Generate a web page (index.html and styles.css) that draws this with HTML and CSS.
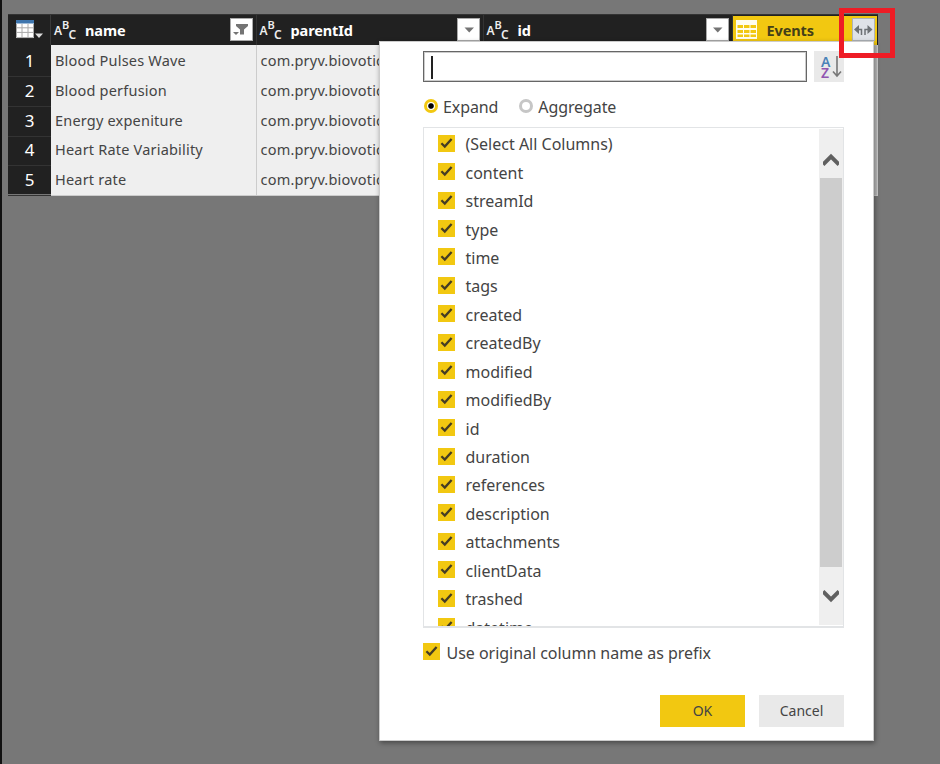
FILE: index.html
```html
<!DOCTYPE html>
<html lang="en">
<head>
<meta charset="utf-8">
<title>Expand columns</title>
<link rel="stylesheet" href="styles.css">
</head>
<body>
<svg class="defs" width="0" height="0">
  <symbol id="check" viewBox="0 0 17 17"><path d="M3.4 8.2 6.8 11.600 13.600 4" fill="none" stroke="#453d24" stroke-width="2.3"/></symbol>
</svg>
<div class="table">
  <div class="row head">
    <div class="corner">
      <svg width="29" height="20" viewBox="0 0 29 20"><path fill="#fff" d="M0 1h18v17H0z"/><path fill="#3f76ae" d="M0 0h18v3.5H0z"/><path d="M0 7.8h18M0 12.4h18M6 4v14M12 4v14M.5 4v13.6h17V4" fill="none" stroke="#aaa"/><path fill="#ddd" d="M19 13.5h8L23 18z"/></svg>
    </div>
    <div class="col"><span class="abc"><i>A</i><i>B</i><i>C</i></span><b>name</b>
      <span class="drop"><svg width="22" height="22" viewBox="0 0 22 22"><path fill="#747474" d="M5 5h12v2l-4 3.500v5h-4v-5L5 7zM2 13h6l-3 3z"/></svg></span></div>
    <div class="col"><span class="abc"><i>A</i><i>B</i><i>C</i></span><b>parentId</b>
      <span class="drop"><svg width="22" height="22" viewBox="0 0 22 22"><path fill="#747474" d="M6.500 8.500h9.500l-4.750 5z"/></svg></span></div>
    <div class="col"><span class="abc"><i>A</i><i>B</i><i>C</i></span><b>id</b>
      <span class="drop"><svg width="22" height="22" viewBox="0 0 22 22"><path fill="#747474" d="M6 8.500h9.500l-4.750 5z"/></svg></span></div>
    <div class="col events">
      <svg width="21" height="19" viewBox="0 0 21 19"><path fill="#fffdf0" d="M0 0h21v19H0z"/><path fill="#f2c811" d="M1.500 5h5.500v3H1.500zM8 5h5.500v3H8zM14.500 5H20v3h-5.500zM1.500 10h5.500v3H1.500zM8 10h5.500v3H8zM14.500 10H20v3h-5.500zM1.500 14.500h5.500V17H1.500zM8 14.500h5.500V17H8zM14.500 14.500H20V17h-5.500z"/></svg>
      <b>Events</b>
      <span class="drop expand"><svg width="20" height="20" viewBox="0 0 20 20"><path fill="#6d7175" d="M1 10.500 6 6v9zM19.500 10.500 14.500 6v9z"/><path d="M5 10.500h3.500V16M15 10.500h-3V16" fill="none" stroke="#6d7175" stroke-width="1.500"/></svg></span>
    </div>
  </div>
  <div class="row"><div class="num">1</div><div class="cell">Blood Pulses Wave</div><div class="cell">com.pryv.biovotion</div><div class="cell"></div><div class="cell last"></div></div>
  <div class="row"><div class="num">2</div><div class="cell">Blood perfusion</div><div class="cell">com.pryv.biovotion</div><div class="cell"></div><div class="cell last"></div></div>
  <div class="row"><div class="num">3</div><div class="cell">Energy expeniture</div><div class="cell">com.pryv.biovotion</div><div class="cell"></div><div class="cell last"></div></div>
  <div class="row"><div class="num">4</div><div class="cell">Heart Rate Variability</div><div class="cell">com.pryv.biovotion</div><div class="cell"></div><div class="cell last"></div></div>
  <div class="row"><div class="num">5</div><div class="cell">Heart rate</div><div class="cell">com.pryv.biovotion</div><div class="cell"></div><div class="cell last"></div></div>
</div>

<div class="dialog">
  <div class="search-row">
    <div class="search"><span class="caret"></span></div>
    <div class="sort"><span class="az"><i>A</i><i>Z</i></span><svg width="10" height="22" viewBox="0 0 10 22"><path d="M5 0v20M1 15.500 5 20l4-4.500" fill="none" stroke="#777" stroke-width="1.600"/></svg></div>
  </div>
  <div class="modes">
    <span class="radio on"></span><span class="mode">Expand</span>
    <span class="radio"></span><span class="mode">Aggregate</span>
  </div>
  <div class="list">
    <div class="items">
      <div class="item"><svg class="box"><use href="#check"/></svg><span>(Select All Columns)</span></div>
      <div class="item"><svg class="box"><use href="#check"/></svg><span>content</span></div>
      <div class="item"><svg class="box"><use href="#check"/></svg><span>streamId</span></div>
      <div class="item"><svg class="box"><use href="#check"/></svg><span>type</span></div>
      <div class="item"><svg class="box"><use href="#check"/></svg><span>time</span></div>
      <div class="item"><svg class="box"><use href="#check"/></svg><span>tags</span></div>
      <div class="item"><svg class="box"><use href="#check"/></svg><span>created</span></div>
      <div class="item"><svg class="box"><use href="#check"/></svg><span>createdBy</span></div>
      <div class="item"><svg class="box"><use href="#check"/></svg><span>modified</span></div>
      <div class="item"><svg class="box"><use href="#check"/></svg><span>modifiedBy</span></div>
      <div class="item"><svg class="box"><use href="#check"/></svg><span>id</span></div>
      <div class="item"><svg class="box"><use href="#check"/></svg><span>duration</span></div>
      <div class="item"><svg class="box"><use href="#check"/></svg><span>references</span></div>
      <div class="item"><svg class="box"><use href="#check"/></svg><span>description</span></div>
      <div class="item"><svg class="box"><use href="#check"/></svg><span>attachments</span></div>
      <div class="item"><svg class="box"><use href="#check"/></svg><span>clientData</span></div>
      <div class="item"><svg class="box"><use href="#check"/></svg><span>trashed</span></div>
      <div class="item"><svg class="box"><use href="#check"/></svg><span>datetime</span></div>
    </div>
    <div class="scroll">
      <div class="arrow up"><svg width="16" height="13" viewBox="0 0 16 13"><path d="M0 11.500 8 3.500l8 8" fill="none" stroke="#606060" stroke-width="4"/></svg></div>
      <div class="thumb"></div>
      <div class="arrow down"><svg width="16" height="13" viewBox="0 0 16 13"><path d="M0 1.500l8 8 8-8" fill="none" stroke="#606060" stroke-width="4"/></svg></div>
    </div>
  </div>
  <div class="prefix"><svg class="box"><use href="#check"/></svg><span>Use original column name as prefix</span></div>
  <div class="buttons"><div class="btn ok">OK</div><div class="btn">Cancel</div></div>
</div>
<div class="highlight"></div>
</body>
</html>
```
FILE: styles.css
```css
* { box-sizing: border-box; }
body {
  margin: 0;
  width: 940px;
  height: 764px;
  overflow: hidden;
  position: relative;
  background: #777;
  border-left: 2px solid #111;
  padding: 14px 0 0 6px;
  font-family: "Noto Sans", "Open Sans", sans-serif;
  color: #444;
}
i { font-style: normal; }
svg { display: block; flex: none; }
.defs { position: absolute; }

.table { width: 870px; background: #212121; }
.row {
  display: grid;
  grid-template-columns: 43px 205.500px 227px 249px 1fr;
  height: 29.800px;
}
.head { height: 31px; border-top: 1px solid #333; }
.corner { padding: 5px 0 0 8px; border-right: 1px solid #3a3a3a; }
.col {
  display: flex;
  align-items: center;
  padding: 0 3px 1px 3px;
  border-right: 1px solid #333;
  color: #fff;
  font-size: 14.500px;
}
.col b { letter-spacing: -.1px; }
.abc {
  display: grid;
  grid-template-columns: 8px 6.500px 7.500px;
  width: 22px;
  height: 22px;
  margin-right: 9px;
  font-size: 12px;
  line-height: 12px;
  font-weight: 600;
  color: #eee;
}
.abc i:nth-child(1) { padding-top: 6px; }
.abc i:nth-child(2) { font-size: 11px; }
.abc i:nth-child(3) { padding-top: 10px; }
.drop { flex: none; margin-left: auto; width: 23px; height: 23px; background: #fff; border: 1px solid #aaa; }
.events {
  margin: 1px 1px 0 0;
  padding: 0 2px 2px 3px;
  background: #f2c811;
  color: #444018;
  border: 0;
}
.events b { margin-left: 10px; }
.expand { background: #dfe2e8; border-color: #aeb2b8; }
.num {
  border-bottom: 1px solid #333;
  color: #fff;
  font-size: 17px;
  line-height: 31px;
  text-align: center;
}
.cell {
  overflow: hidden;
  padding-left: 4px;
  background: #efefef;
  border-right: 1px solid #ccc;
  border-bottom: 1px solid #ccc;
  font-size: 14.500px;
  line-height: 30.500px;
  letter-spacing: .2px;
  white-space: nowrap;
}
.last { background: #bbb; }

.dialog {
  position: absolute;
  left: 377px;
  top: 41px;
  width: 495px;
  height: 700px;
  padding: 9px 29px 0 43px;
  background: #fff;
  border: 1px solid #ccc;
  box-shadow: 1px 2px 5px rgba(0, 0, 0, .4);
}
.search-row { display: flex; gap: 7px; height: 31px; }
.search { width: 384px; padding: 4px 0 0 7px; border: 1px solid #666; box-shadow: inset 0 0 0 1px #ccc; }
.caret { display: block; width: 1.500px; height: 23px; background: #222; }
.sort { display: flex; gap: 1px; width: 30px; padding: 5px 0 0 7px; background: #e9e9e9; }
.az { display: grid; grid-template-rows: 11px 11px; width: 10px; font-size: 14px; line-height: 11px; font-weight: 600; color: #4a82b8; }
.az i:last-child { color: #9055b0; }
.modes { display: flex; align-items: center; height: 24px; margin-top: 12px; font-size: 16px; }
.radio { width: 14px; height: 14px; margin-left: 1px; border: 3px solid #c6c6c6; border-radius: 50%; }
.radio.on { border-color: #f2c811; background: radial-gradient(circle, #000 0 2.300px, #fff 3.300px); }
.mode { margin: 0 20px 0 5px; padding-top: 2px; letter-spacing: -.1px; }
.list {
  display: flex;
  width: 421px;
  height: 501px;
  margin-top: 9px;
  border: 1px solid #e2e4e6;
  border-bottom-width: 2px;
  overflow: hidden;
}
.items { flex: 1; padding: 1px 0 0 14px; }
.item { display: flex; align-items: center; height: 28.450px; font-size: 16px; white-space: nowrap; }
.item span { margin-left: 10.500px; padding-top: 2px; }
.box { width: 17px; height: 17px; background: #f2c811; }
.scroll { display: flex; flex-direction: column; width: 24px; padding: 0 1px; margin: 1px 0; background: #efefef; }
.up { height: 49px; padding: 24px 0 0 3px; }
.thumb { height: 389px; background: #cdcdcd; }
.down { padding: 23px 0 0 3px; }
.prefix { display: flex; align-items: center; height: 24px; margin-top: 11px; font-size: 16px; letter-spacing: -.03px; }
.prefix span { margin-left: 6.500px; padding-top: 3px; white-space: nowrap; }
.buttons { display: flex; justify-content: flex-end; gap: 14px; margin-top: 32px; }
.btn { width: 85px; height: 32px; background: #e9e9e9; font-size: 14px; line-height: 32px; text-align: center; }
.ok { background: #f2c811; }
.highlight {
  position: absolute;
  left: 837px;
  top: 8px;
  width: 55.500px;
  height: 50px;
  border: 5px solid #ee1c25;
}
```
